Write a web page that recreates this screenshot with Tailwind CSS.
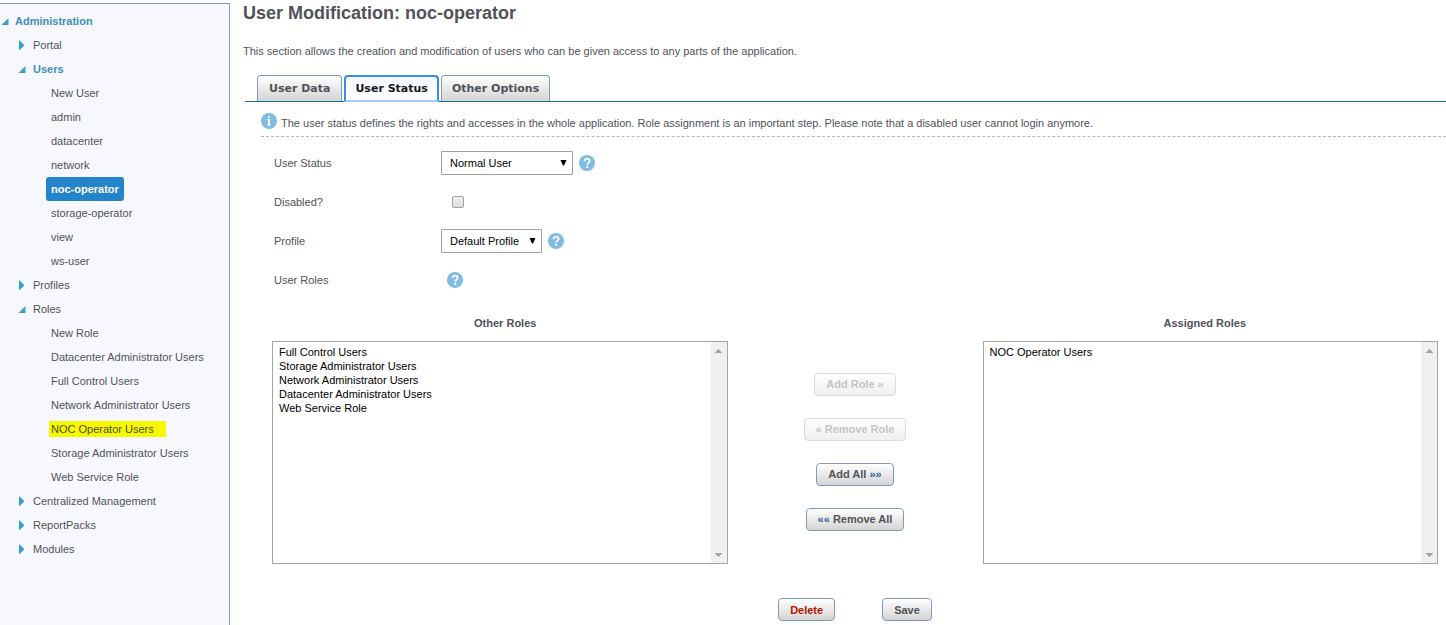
<!DOCTYPE html>
<html lang="en">
<head>
  <meta charset="UTF-8" />
  <meta name="viewport" content="width=device-width, initial-scale=1">
  <title>User Modification: noc-operator</title>
  <script src="https://cdn.jsdelivr.net/npm/@tailwindcss/browser@4"></script>
</head>
<body class="bg-white font-['Liberation_Sans',Arial,sans-serif] text-[11px] leading-4 text-[#505359]">

  <!-- Icons -->
  <svg class="hidden">
    <symbol id="closed" viewBox="0 0 8 12"><path d="M1 1v10.500L6.500 6.250z" fill="#36a0d0" /></symbol>
    <symbol id="open" viewBox="0 0 8 12"><path d="M7.500 3v7H.5z" fill="#36a0d0" /></symbol>
    <symbol id="help" viewBox="0 0 16 16">
      <circle cx="8" cy="8" r="8" fill="#80bce0" />
      <path d="M5.600 6.200C5.600 4.600 6.600 3.700 8.100 3.700s2.500.8 2.500 2.100c0 1.900-2.300 1.800-2.300 3.900" fill="none" stroke="#fff" stroke-width="1.800" />
      <rect x="7.200" y="10.800" width="2.100" height="2" fill="#fff" />
    </symbol>
    <symbol id="info" viewBox="0 0 16 16">
      <circle cx="8" cy="8" r="8" fill="#80bce0" />
      <path d="M7 3h2v2H7zM6 6h3v5.500h1v1H6v-1h1V7H6z" fill="#fff" />
    </symbol>
    <symbol id="drop" viewBox="0 0 7 7"><path d="M.5 1h6L4 6.500H3z" fill="#000" /></symbol>
    <symbol id="scroll-up" viewBox="0 0 7 4"><path d="M0 4V3h1V2h1V1h1V0h1v1h1v1h1v1h1v1z" fill="#a3a3a3" /></symbol>
    <symbol id="scroll-down" viewBox="0 0 7 4"><path d="M0 0v1h1v1h1v1h1v1h1V3h1V2h1V1h1V0z" fill="#a3a3a3" /></symbol>
  </svg>

  <div class="flex min-h-screen">

    <!-- Navigation tree -->
    <nav class="mt-[3px] w-[230px] shrink-0 border-t border-r border-[#7f9db9] bg-[#f7f8fd] pt-[5px]">
      <ul class="leading-6">
        <li>
          <a href="#" class="flex items-center gap-[6px] pl-px font-bold text-[#3f8fb5]"><svg class="h-3 w-2"><use href="#open" /></svg>Administration</a>
          <ul>
            <li><a href="#" class="flex items-center gap-[7px] pl-[18px]"><svg class="h-3 w-2"><use href="#closed" /></svg>Portal</a></li>
            <li>
              <a href="#" class="flex items-center gap-[7px] pl-[18px] font-bold text-[#3f8fb5]"><svg class="h-3 w-2"><use href="#open" /></svg>Users</a>
              <ul class="pl-[46px]">
                <li><a href="#" class="block px-[5px]">New User</a></li>
                <li><a href="#" class="block px-[5px]">admin</a></li>
                <li><a href="#" class="block px-[5px]">datacenter</a></li>
                <li><a href="#" class="block px-[5px]">network</a></li>
                <li><a href="#" class="block w-fit rounded-[3px] bg-[#2383cb] px-[5px] font-bold text-white">noc-operator</a></li>
                <li><a href="#" class="block px-[5px]">storage-operator</a></li>
                <li><a href="#" class="block px-[5px]">view</a></li>
                <li><a href="#" class="block px-[5px]">ws-user</a></li>
              </ul>
            </li>
            <li><a href="#" class="flex items-center gap-[7px] pl-[18px]"><svg class="h-3 w-2"><use href="#closed" /></svg>Profiles</a></li>
            <li>
              <a href="#" class="flex items-center gap-[7px] pl-[18px]"><svg class="h-3 w-2"><use href="#open" /></svg>Roles</a>
              <ul class="pl-[46px]">
                <li><a href="#" class="block px-[5px]">New Role</a></li>
                <li><a href="#" class="block px-[5px]">Datacenter Administrator Users</a></li>
                <li><a href="#" class="block px-[5px]">Full Control Users</a></li>
                <li><a href="#" class="block px-[5px]">Network Administrator Users</a></li>
                <li class="flex h-6 items-center pl-[3px]"><a href="#" class="bg-[#f8f900] pr-3 pl-[2px] leading-4 text-[#4c4d12]">NOC Operator Users</a></li>
                <li><a href="#" class="block px-[5px]">Storage Administrator Users</a></li>
                <li><a href="#" class="block px-[5px]">Web Service Role</a></li>
              </ul>
            </li>
            <li><a href="#" class="flex items-center gap-[7px] pl-[18px]"><svg class="h-3 w-2"><use href="#closed" /></svg>Centralized Management</a></li>
            <li><a href="#" class="flex items-center gap-[7px] pl-[18px]"><svg class="h-3 w-2"><use href="#closed" /></svg>ReportPacks</a></li>
            <li><a href="#" class="flex items-center gap-[7px] pl-[18px]"><svg class="h-3 w-2"><use href="#closed" /></svg>Modules</a></li>
          </ul>
        </li>
      </ul>
    </nav>

    <!-- Main content -->
    <main class="min-w-0 flex-1 pl-[13px]">
      <h1 class="pt-px text-lg leading-6 font-bold">User Modification: noc-operator</h1>
      <p class="mt-[18px]">This section allows the creation and modification of users who can be given access to any parts of the application.</p>

      <!-- Tabs -->
      <div class="mt-4 ml-[2px] flex items-end gap-[2px] border-b border-[#1b6f95] pl-3 font-['DejaVu_Sans',Verdana,sans-serif] font-bold">
        <button type="button" class="h-[26px] rounded-t border border-b-0 border-[#7f9db9] bg-linear-to-b from-white to-[#d4d4d4] px-[11px]">User Data</button>
        <button type="button" class="-mb-px h-[27px] rounded-t border-2 border-[#3b8ae6] border-b-[#a8c8ff] bg-linear-to-b from-[#f3f7ff] to-white px-[9px] text-[#15181d]">User Status</button>
        <button type="button" class="h-[26px] rounded-t border border-b-0 border-[#7f9db9] bg-linear-to-b from-white to-[#d4d4d4] px-[10px]">Other Options</button>
      </div>

      <div class="ml-[18px] flex h-[35px] items-center gap-1 border-b border-dashed border-[#b5b5b5]">
        <svg class="mt-1 size-4"><use href="#info" /></svg>
        <p class="pt-2">The user status defines the rights and accesses in the whole application. Role assignment is an important step. Please note that a disabled user cannot login anymore.</p>
      </div>

      <form class="pt-[6px] pr-2 pl-[29px]">
        <div class="grid auto-rows-[39px] grid-cols-[167px_1fr] items-center pl-[2px]">
          <label for="status">User Status</label>
          <div class="flex items-center gap-[6px] pt-px">
            <div class="relative w-[132px] text-black">
              <select id="status" class="h-6 w-full appearance-none rounded-[1px] border border-[#a0a0a0] bg-white pl-2">
                <option>Normal User</option>
              </select>
              <svg class="pointer-events-none absolute top-2 right-[6px] size-[7px]"><use href="#drop" /></svg>
            </div>
            <svg class="size-4"><use href="#help" /></svg>
          </div>

          <label for="disabled">Disabled?</label>
          <input id="disabled" type="checkbox" class="ml-[11px] size-3 appearance-none rounded-[2px] border border-[#a0a0a0] bg-linear-to-b from-[#f0f0f0] to-[#dcdcdc]">

          <label for="profile">Profile</label>
          <div class="flex items-center gap-[6px] pt-px">
            <div class="relative w-[101px] text-black">
              <select id="profile" class="h-6 w-full appearance-none rounded-[1px] border border-[#a0a0a0] bg-white pl-2">
                <option>Default Profile</option>
              </select>
              <svg class="pointer-events-none absolute top-2 right-[6px] size-[7px]"><use href="#drop" /></svg>
            </div>
            <svg class="size-4"><use href="#help" /></svg>
          </div>

          <span>User Roles</span>
          <svg class="ml-[6px] size-4"><use href="#help" /></svg>
        </div>

        <!-- Role assignment -->
        <div class="mt-4 grid grid-cols-[1fr_255px_1fr] gap-y-[10px]">
          <label for="other-roles" class="pl-[11px] text-center font-bold">Other Roles</label>
          <span></span>
          <label for="assigned-roles" class="pr-[11px] text-center font-bold">Assigned Roles</label>

          <div class="flex h-[223px] border border-[#a5a5a5] text-black">
            <select id="other-roles" multiple class="min-w-0 flex-1 overflow-hidden py-[3px] pl-1 outline-none">
              <option class="h-[14px] px-[2px] pt-px pb-0">Full Control Users</option>
              <option class="h-[14px] px-[2px] pt-px pb-0">Storage Administrator Users</option>
              <option class="h-[14px] px-[2px] pt-px pb-0">Network Administrator Users</option>
              <option class="h-[14px] px-[2px] pt-px pb-0">Datacenter Administrator Users</option>
              <option class="h-[14px] px-[2px] pt-px pb-0">Web Service Role</option>
            </select>
            <div class="flex w-4 flex-col items-center justify-between bg-[#f0f0f0] pt-[7px] pb-[6px]">
              <svg class="h-1 w-[7px]"><use href="#scroll-up" /></svg>
              <svg class="h-1 w-[7px]"><use href="#scroll-down" /></svg>
            </div>
          </div>

          <div class="flex flex-col items-center justify-center gap-[22px] pb-[2px] font-bold">
            <button type="button" disabled class="h-[23px] rounded border border-[#7f9db9] bg-linear-to-b from-white to-[#d4d4d4] px-[11px] opacity-35">Add Role »</button>
            <button type="button" disabled class="h-[23px] rounded border border-[#7f9db9] bg-linear-to-b from-white to-[#d4d4d4] px-[11px] opacity-35">« Remove Role</button>
            <button type="button" class="h-[23px] rounded border border-[#7f9db9] bg-linear-to-b from-white to-[#d4d4d4] px-[11px]">Add All <span class="text-[#2f5f9e]">»»</span></button>
            <button type="button" class="h-[23px] rounded border border-[#7f9db9] bg-linear-to-b from-white to-[#d4d4d4] px-[11px]"><span class="text-[#2f5f9e]">««</span> Remove All</button>
          </div>

          <div class="flex h-[223px] border border-[#a5a5a5] text-black">
            <select id="assigned-roles" multiple class="min-w-0 flex-1 overflow-hidden py-[3px] pl-1 outline-none">
              <option class="h-[14px] px-[2px] pt-px pb-0">NOC Operator Users</option>
            </select>
            <div class="flex w-4 flex-col items-center justify-between bg-[#f0f0f0] pt-[7px] pb-[6px]">
              <svg class="h-1 w-[7px]"><use href="#scroll-up" /></svg>
              <svg class="h-1 w-[7px]"><use href="#scroll-down" /></svg>
            </div>
          </div>
        </div>

        <div class="mt-[34px] flex justify-center gap-[47px] font-bold">
          <button type="button" class="h-[23px] rounded border border-[#7f9db9] bg-linear-to-b from-white to-[#d4d4d4] px-[11px] text-[#b71200]">Delete</button>
          <button type="submit" class="h-[23px] rounded border border-[#7f9db9] bg-linear-to-b from-white to-[#d4d4d4] px-[11px]">Save</button>
        </div>
      </form>
    </main>
  </div>

</body>
</html>
